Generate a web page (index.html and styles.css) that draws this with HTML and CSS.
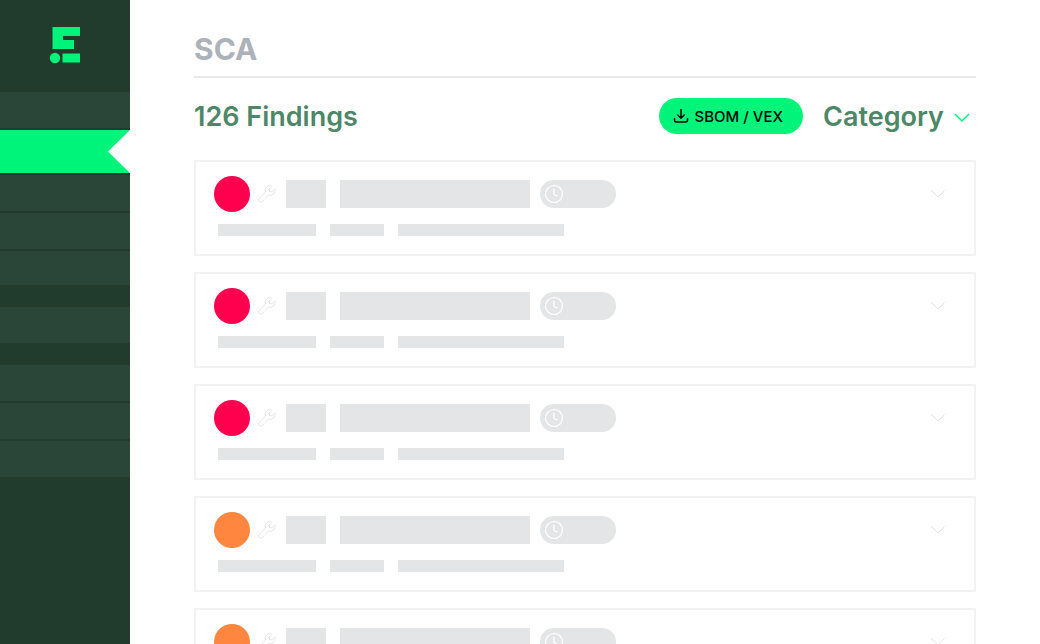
FILE: index.html
```html
<!DOCTYPE html>
<html lang="en">
  <head>
    <meta charset="UTF-8" />
    <meta name="viewport" content="width=device-width, initial-scale=1.0" />
    <title>SCA</title>
    <link rel="stylesheet" href="styles.css" />
  </head>
  <body>
    <!-- shared icons -->
    <svg class="sprite" aria-hidden="true">
      <symbol id="wrench" viewBox="0 0 20 20">
        <path d="M17.800 5.200l-2.800 2.700-2.400-.500-.500-2.400 2.800-2.800c-2.200-.900-4.700-.200-5.900 1.700-.8 1.300-.9 2.700-.4 4.100L2.100 14.400a2.100 2.100 0 0 0 0 3 2.100 2.100 0 0 0 3 0L11.600 11c1.500.5 3.200.3 4.500-.7 1.700-1.200 2.300-3.200 1.700-5.100z" />
      </symbol>
      <symbol id="clock" viewBox="0 0 20 20">
        <circle cx="10" cy="10" r="8.5" />
        <path d="M10 5v5.500l3.500 1.800" />
      </symbol>
      <symbol id="chevron" viewBox="0 0 16 10">
        <path d="M1 1l7 7 7-7" />
      </symbol>
    </svg>

    <aside class="sidebar">
      <a href="#" class="logo" aria-label="Home">
        <svg width="30" height="36" viewBox="0 0 30 36" aria-hidden="true">
          <path d="M2.500 0H30v9H13v4h11v9H2.500zM12.500 26.500H30v9H12.500z" />
          <circle cx="5" cy="31" r="5.200" />
        </svg>
      </a>
      <nav class="menu">
        <div class="menu-group">
          <a href="#" class="menu-item" aria-label="Overview"></a>
          <a href="#" class="menu-item active" aria-label="Findings"></a>
          <a href="#" class="menu-item" aria-label="Assets"></a>
          <a href="#" class="menu-item" aria-label="Scans"></a>
          <a href="#" class="menu-item short" aria-label="Reports"></a>
        </div>
        <div class="menu-group">
          <a href="#" class="menu-item" aria-label="Integrations"></a>
        </div>
        <div class="menu-group">
          <a href="#" class="menu-item" aria-label="Team"></a>
          <a href="#" class="menu-item" aria-label="Settings"></a>
          <a href="#" class="menu-item" aria-label="Help"></a>
        </div>
      </nav>
    </aside>

    <main class="content">
      <h1 class="title">SCA</h1>

      <div class="toolbar">
        <h2 class="count">126 Findings</h2>
        <button type="button" class="export">
          <svg width="16" height="16" viewBox="0 0 16 16" aria-hidden="true">
            <path d="M8 1.500v8.500M4.800 7L8 10.200 11.200 7M1.500 10.500v1.500a2 2 0 0 0 2 2h9a2 2 0 0 0 2-2v-1.500" />
          </svg>
          SBOM / VEX
        </button>
        <div class="category">
          <select class="category-select" aria-label="Category">
            <option>Category</option>
          </select>
          <svg class="category-arrow" aria-hidden="true"><use href="#chevron" /></svg>
        </div>
      </div>

      <ul class="findings">
        <li class="card">
          <div class="row">
            <span class="severity critical"></span>
            <svg class="wrench"><use href="#wrench" /></svg>
            <span class="block id"></span>
            <span class="block name"></span>
            <span class="pill"><svg class="clock"><use href="#clock" /></svg></span>
            <button type="button" class="toggle" aria-label="Expand">
              <svg class="arrow"><use href="#chevron" /></svg>
            </button>
          </div>
          <div class="meta">
            <span class="line medium"></span>
            <span class="line small"></span>
            <span class="line large"></span>
          </div>
        </li>
        <li class="card">
          <div class="row">
            <span class="severity critical"></span>
            <svg class="wrench"><use href="#wrench" /></svg>
            <span class="block id"></span>
            <span class="block name"></span>
            <span class="pill"><svg class="clock"><use href="#clock" /></svg></span>
            <button type="button" class="toggle" aria-label="Expand">
              <svg class="arrow"><use href="#chevron" /></svg>
            </button>
          </div>
          <div class="meta">
            <span class="line medium"></span>
            <span class="line small"></span>
            <span class="line large"></span>
          </div>
        </li>
        <li class="card">
          <div class="row">
            <span class="severity critical"></span>
            <svg class="wrench"><use href="#wrench" /></svg>
            <span class="block id"></span>
            <span class="block name"></span>
            <span class="pill"><svg class="clock"><use href="#clock" /></svg></span>
            <button type="button" class="toggle" aria-label="Expand">
              <svg class="arrow"><use href="#chevron" /></svg>
            </button>
          </div>
          <div class="meta">
            <span class="line medium"></span>
            <span class="line small"></span>
            <span class="line large"></span>
          </div>
        </li>
        <li class="card">
          <div class="row">
            <span class="severity high"></span>
            <svg class="wrench"><use href="#wrench" /></svg>
            <span class="block id"></span>
            <span class="block name"></span>
            <span class="pill"><svg class="clock"><use href="#clock" /></svg></span>
            <button type="button" class="toggle" aria-label="Expand">
              <svg class="arrow"><use href="#chevron" /></svg>
            </button>
          </div>
          <div class="meta">
            <span class="line medium"></span>
            <span class="line small"></span>
            <span class="line large"></span>
          </div>
        </li>
        <li class="card">
          <div class="row">
            <span class="severity high"></span>
            <svg class="wrench"><use href="#wrench" /></svg>
            <span class="block id"></span>
            <span class="block name"></span>
            <span class="pill"><svg class="clock"><use href="#clock" /></svg></span>
            <button type="button" class="toggle" aria-label="Expand">
              <svg class="arrow"><use href="#chevron" /></svg>
            </button>
          </div>
          <div class="meta">
            <span class="line medium"></span>
            <span class="line small"></span>
            <span class="line large"></span>
          </div>
        </li>
      </ul>
    </main>
  </body>
</html>
```
FILE: styles.css
```css
* {
  box-sizing: border-box;
}

body {
  display: flex;
  height: 100vh;
  margin: 0;
  overflow: hidden;
  font-family: Inter, "Liberation Sans", Arial, sans-serif;
  background-color: white;
}

.sprite {
  position: absolute;
  width: 0;
  height: 0;
}

/* sidebar */
.sidebar {
  flex: none;
  width: 130px;
  background-color: #213c2d;
}

.logo {
  display: flex;
  justify-content: center;
  height: 92px;
  padding-top: 27px;
}

.logo svg {
  overflow: visible;
  fill: #00f47a;
}

.menu {
  display: flex;
  flex-direction: column;
  gap: 22px;
}

.menu-group {
  display: flex;
  flex-direction: column;
  gap: 2px;
}

.menu-item {
  height: 36px;
  background-color: #2a4638;
}

.menu-item.short {
  height: 34px;
}

.menu-item.active {
  position: relative;
  height: 43px;
  background-color: #00f47a;
}

.menu-item.active::after {
  content: "";
  position: absolute;
  top: 0;
  right: 0;
  width: 22px;
  height: 100%;
  background-color: white;
  clip-path: polygon(100% 0, 0 50%, 100% 100%);
}

/* content */
.content {
  flex: 1;
  padding: 32px 64px 0;
}

.title {
  margin: 0;
  padding-bottom: 10px;
  border-bottom: 2px solid #e6e7e8;
  font-size: 30px;
  line-height: 34px;
  font-weight: 700;
  color: #adb1b8;
}

.toolbar {
  display: flex;
  align-items: center;
  margin: 20px 0 26px;
}

.count {
  flex: 1;
  margin: 0;
  padding-top: 2px;
  font-size: 27px;
  line-height: 34px;
  font-weight: 600;
  color: #4d8768;
}

.export {
  display: flex;
  align-items: center;
  gap: 6px;
  height: 36px;
  margin-right: 20px;
  padding: 0 20px 0 14px;
  border: none;
  border-radius: 18px;
  font-family: inherit;
  font-size: 15px;
  font-weight: 500;
  color: black;
  background-color: #00f47a;
  cursor: pointer;
}

.export svg {
  fill: none;
  stroke: black;
  stroke-width: 1.5;
  stroke-linecap: round;
  stroke-linejoin: round;
}

.category {
  position: relative;
}

.category-select {
  height: 36px;
  padding: 2px 32px 0 0;
  border: none;
  appearance: none;
  font-family: inherit;
  font-size: 27px;
  line-height: 34px;
  font-weight: 600;
  color: #4d8768;
  background: none;
  cursor: pointer;
}

.category-arrow {
  position: absolute;
  top: 15px;
  right: 6px;
  width: 16px;
  height: 10px;
  fill: none;
  stroke: #00f47a;
  stroke-width: 1.5;
  pointer-events: none;
}

/* findings list */
.findings {
  display: flex;
  flex-direction: column;
  gap: 16px;
  margin: 0;
  padding: 0;
  list-style: none;
}

.card {
  padding: 14px 28px 18px 18px;
  border: 2px solid #f2f2f2;
}

.row {
  display: flex;
  align-items: center;
}

.severity {
  width: 36px;
  height: 36px;
  border-radius: 50%;
}

.critical {
  background-color: #ff004f;
}

.high {
  background-color: #ff863f;
}

.wrench {
  width: 20px;
  height: 20px;
  margin: 0 9px 0 7px;
  fill: none;
  stroke: #e4e5e7;
}

.block,
.pill {
  height: 28px;
  background-color: #e4e5e7;
}

.id {
  width: 40px;
  margin-right: 14px;
}

.name {
  width: 190px;
  margin-right: 10px;
}

.pill {
  display: flex;
  align-items: center;
  width: 76px;
  padding-left: 4px;
  border-radius: 14px;
}

.clock {
  width: 20px;
  height: 20px;
  fill: none;
  stroke: white;
  stroke-width: 1.2;
}

.toggle {
  display: flex;
  margin-left: auto;
  padding: 0;
  border: none;
  background: none;
  cursor: pointer;
}

.arrow {
  width: 16px;
  height: 10px;
  fill: none;
  stroke: #e4e5e7;
}

.meta {
  display: flex;
  gap: 14px;
  margin-top: 12px;
  padding-left: 4px;
}

.line {
  height: 12px;
  background-color: #e4e5e7;
}

.small {
  width: 54px;
}

.medium {
  width: 98px;
}

.large {
  width: 166px;
}
```
